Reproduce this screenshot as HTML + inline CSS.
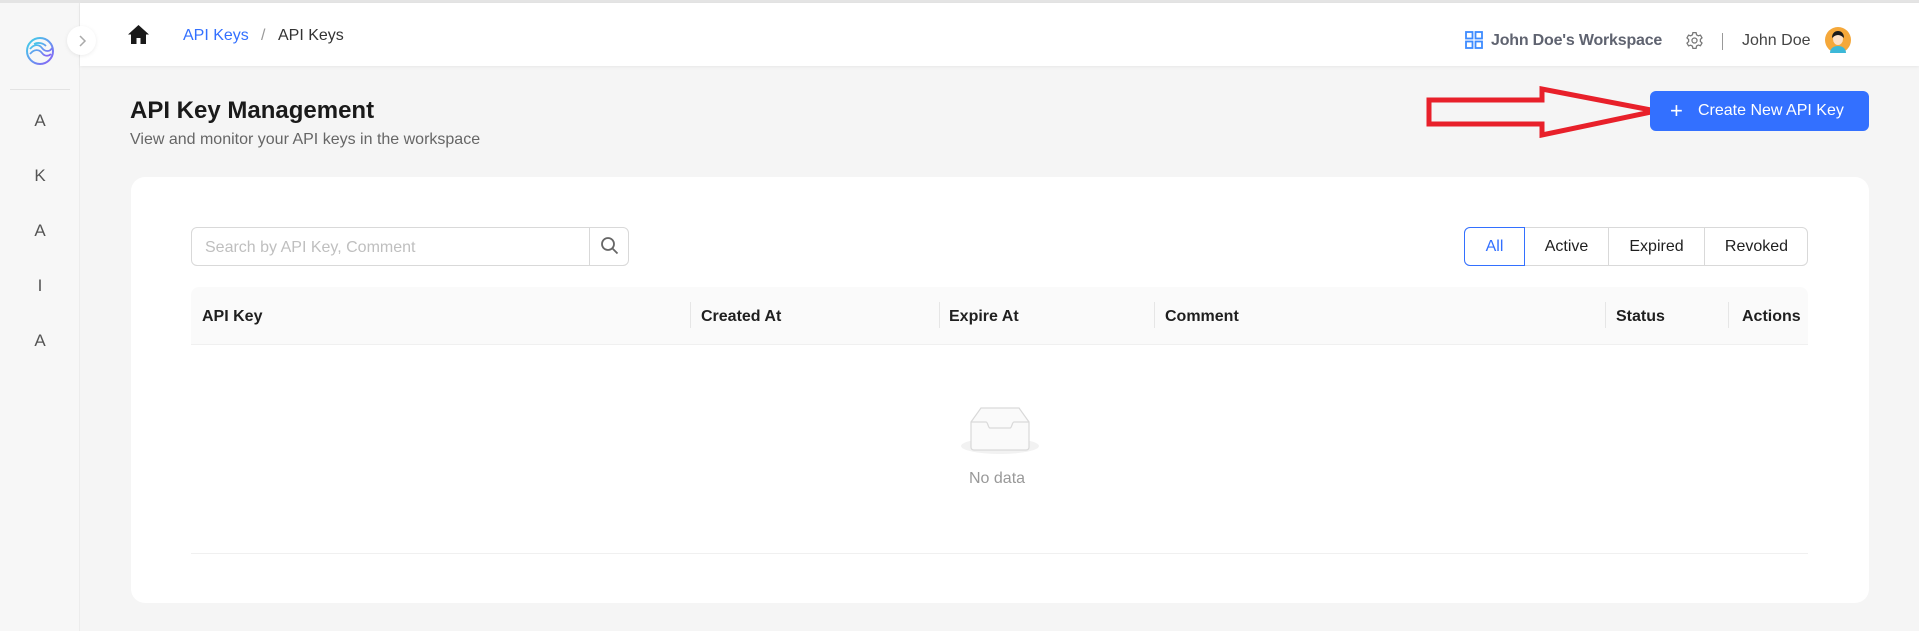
<!DOCTYPE html>
<html><head><meta charset="utf-8">
<style>
*{box-sizing:border-box;margin:0;padding:0}
body{width:1919px;height:631px;overflow:hidden;background:#f5f5f5;font-family:"Liberation Sans",Arial,sans-serif;position:relative;color:#1f1f1f}
.abs{position:absolute}
.topline{left:0;top:0;width:1919px;height:3px;background:#e4e4e4}
.side{left:0;top:3px;width:80px;height:628px;background:#f7f7f7;border-right:1px solid #ececec}
.header{left:80px;top:3px;width:1839px;height:63px;background:#fff;box-shadow:0 1px 3px rgba(0,0,0,.06)}
.letter{left:0;width:80px;text-align:center;font-size:17px;color:#555}
.t{white-space:nowrap}
.card{left:131px;top:177px;width:1738px;height:426px;background:#fff;border-radius:14px}
.seg{top:227px;height:39px;font-size:16px;line-height:39px;text-align:center;color:#1f1f1f}
.th{top:288px;height:58px;line-height:58px;font-weight:bold;font-size:16px}
.sep{top:302px;width:1px;height:26px;background:#e6e6e6}
</style></head><body>
<div class="abs topline"></div>
<div class="abs side"></div>
<div class="abs header"></div>
<svg class="abs" style="left:24px;top:36px" width="32" height="30" viewBox="0 0 32 30">
<defs><linearGradient id="g" x1="0" y1="0" x2="1" y2="1"><stop offset="0" stop-color="#3fd6e8"/><stop offset="1" stop-color="#8a5cf6"/></linearGradient></defs>
<circle cx="16" cy="15" r="13" fill="none" stroke="url(#g)" stroke-width="2"/>
<path d="M6 13c4-5 9-5 12-1s8 4 10 0M6 18c4-5 9-5 12-1s7 3 9 1M10 8c4-2 9-1 12 2" fill="none" stroke="url(#g)" stroke-width="1.8"/>
</svg>
<div class="abs" style="left:67px;top:26px;width:29px;height:29px;border-radius:50%;background:#fff;box-shadow:0 1px 4px rgba(0,0,0,.08)"></div>
<svg class="abs" style="left:77px;top:34px" width="10" height="14" viewBox="0 0 10 14"><path d="M3 2l5 5-5 5" fill="none" stroke="#aaa" stroke-width="1.5"/></svg>
<div class="abs" style="left:10px;top:89px;width:60px;height:1px;background:#e3e3e3"></div>
<div class="abs letter" style="top:111px">A</div>
<div class="abs letter" style="top:166px">K</div>
<div class="abs letter" style="top:221px">A</div>
<div class="abs letter" style="top:276px">I</div>
<div class="abs letter" style="top:331px">A</div>
<svg class="abs" style="left:128px;top:25px" width="21" height="19" viewBox="0 0 21 19"><path d="M10.5 0L0 9.5h3V19h5.5v-6h4v6H18V9.5h3z" fill="#1a1a1a"/></svg>
<div class="abs t" style="left:183px;top:27px;font-size:16px;color:#3370ff">API Keys</div>
<div class="abs t" style="left:261px;top:27px;font-size:16px;color:#999">/</div>
<div class="abs t" style="left:278px;top:27px;font-size:16px;color:#333">API Keys</div>
<svg class="abs" style="left:1465px;top:31px" width="18" height="18" viewBox="0 0 18 18" fill="none" stroke="#3d8bff" stroke-width="1.8"><rect x="1" y="1" width="6.5" height="6.5"/><rect x="10.5" y="1" width="6.5" height="6.5"/><rect x="1" y="10.5" width="6.5" height="6.5"/><rect x="10.5" y="10.5" width="6.5" height="6.5"/></svg>
<div class="abs t" style="left:1491px;top:32px;font-size:16px;font-weight:bold;color:#5f6370;letter-spacing:-.2px">John Doe's Workspace</div>
<svg class="abs" style="left:1685px;top:31px" width="19" height="19" viewBox="0 0 24 24" fill="none" stroke="#777" stroke-width="1.6"><circle cx="12" cy="12" r="3.2"/><path d="M10 2h4l.6 2.8 2.2 1.3 2.7-.9 2 3.5-2.1 1.9v2.6l2.1 1.9-2 3.5-2.7-.9-2.2 1.3L14 22h-4l-.6-2.8-2.2-1.3-2.7.9-2-3.5 2.1-1.9v-2.6L2.5 8.7l2-3.5 2.7.9 2.2-1.3z"/></svg>
<div class="abs" style="left:1722px;top:33px;width:1px;height:17px;background:#999"></div>
<div class="abs t" style="left:1742px;top:32px;font-size:16px;color:#444">John Doe</div>
<svg class="abs" style="left:1825px;top:27px" width="26" height="26" viewBox="0 0 26 26"><circle cx="13" cy="13" r="13" fill="#f5a83a"/><path d="M5 26c0-5 4-7 8-7s8 2 8 7z" fill="#3cb8d8"/><ellipse cx="13" cy="12" rx="5" ry="6" fill="#fde1c8"/><path d="M7 11c0-5 3-7 6-7s6 2 6 7c-2-2-4-3-6-3s-4 1-6 3z" fill="#1a1a1a"/></svg>
<div class="abs t" style="left:130px;top:97px;font-size:24px;font-weight:bold;color:#1a1a1a">API Key Management</div>
<div class="abs t" style="left:130px;top:131px;font-size:16px;color:#666">View and monitor your API keys in the workspace</div>
<svg class="abs" style="left:1426px;top:86px" width="235" height="52" viewBox="0 0 235 52"><path d="M3 14H116V3L230 25 116 49V38H3z" fill="none" stroke="#e8202a" stroke-width="5" stroke-linejoin="miter"/></svg>
<div class="abs" style="left:1650px;top:91px;width:219px;height:40px;background:#3370ff;border-radius:6px;color:#fff;font-size:16px;line-height:40px">
<span class="abs" style="left:20px;top:0;font-size:22px;font-weight:300">+</span><span class="abs t" style="left:48px;top:0">Create New API Key</span></div>
<div class="abs card"></div>
<div class="abs" style="left:191px;top:227px;width:438px;height:39px;border:1px solid #d9d9d9;border-radius:6px;background:#fff"></div>
<div class="abs" style="left:589px;top:227px;width:1px;height:39px;background:#d9d9d9"></div>
<div class="abs t" style="left:205px;top:239px;font-size:16px;color:#bfbfbf">Search by API Key, Comment</div>
<svg class="abs" style="left:600px;top:236px" width="20" height="20" viewBox="0 0 20 20" fill="none" stroke="#666" stroke-width="1.8"><circle cx="8" cy="8" r="6"/><path d="M12.5 12.5l5 5"/></svg>
<div class="abs" style="left:1464px;top:227px;width:344px;height:39px;border:1px solid #d9d9d9;border-radius:6px;background:#fff"></div>
<div class="abs" style="left:1608px;top:228px;width:1px;height:37px;background:#d9d9d9"></div>
<div class="abs" style="left:1704px;top:228px;width:1px;height:37px;background:#d9d9d9"></div>
<div class="abs seg" style="left:1525px;width:83px">Active</div>
<div class="abs seg" style="left:1609px;width:95px">Expired</div>
<div class="abs seg" style="left:1705px;width:103px">Revoked</div>
<div class="abs seg" style="left:1464px;width:61px;border:1px solid #3370ff;line-height:37px;color:#3370ff;border-radius:6px 0 0 6px;background:#fff">All</div>
<div class="abs" style="left:191px;top:287px;width:1617px;height:58px;background:#fafafa;border-radius:8px 8px 0 0;border-bottom:1px solid #f0f0f0"></div>
<div class="abs th" style="left:202px">API Key</div>
<div class="abs th" style="left:701px">Created At</div>
<div class="abs th" style="left:949px">Expire At</div>
<div class="abs th" style="left:1165px">Comment</div>
<div class="abs th" style="left:1616px">Status</div>
<div class="abs th" style="left:1742px">Actions</div>
<div class="abs sep" style="left:690px"></div><div class="abs sep" style="left:939px"></div><div class="abs sep" style="left:1154px"></div><div class="abs sep" style="left:1605px"></div><div class="abs sep" style="left:1728px"></div>
<svg class="abs" style="left:960px;top:404px" width="80" height="52" viewBox="0 0 80 52"><ellipse cx="40" cy="42" rx="39" ry="8" fill="#f2f2f2"/><path d="M11 18L21 4h38l10 14v25c0 2-1 3-3 3H14c-2 0-3-1-3-3z" fill="#fafafa" stroke="#d9d9d9" stroke-width="1.2"/><path d="M11 18h15c2 0 2 6 4 6h20c2 0 2-6 4-6h15" fill="none" stroke="#d9d9d9" stroke-width="1.2"/></svg>
<div class="abs t" style="left:969px;top:470px;font-size:16px;color:#999">No data</div>
<div class="abs" style="left:191px;top:553px;width:1617px;height:1px;background:#f0f0f0"></div>
</body></html>
